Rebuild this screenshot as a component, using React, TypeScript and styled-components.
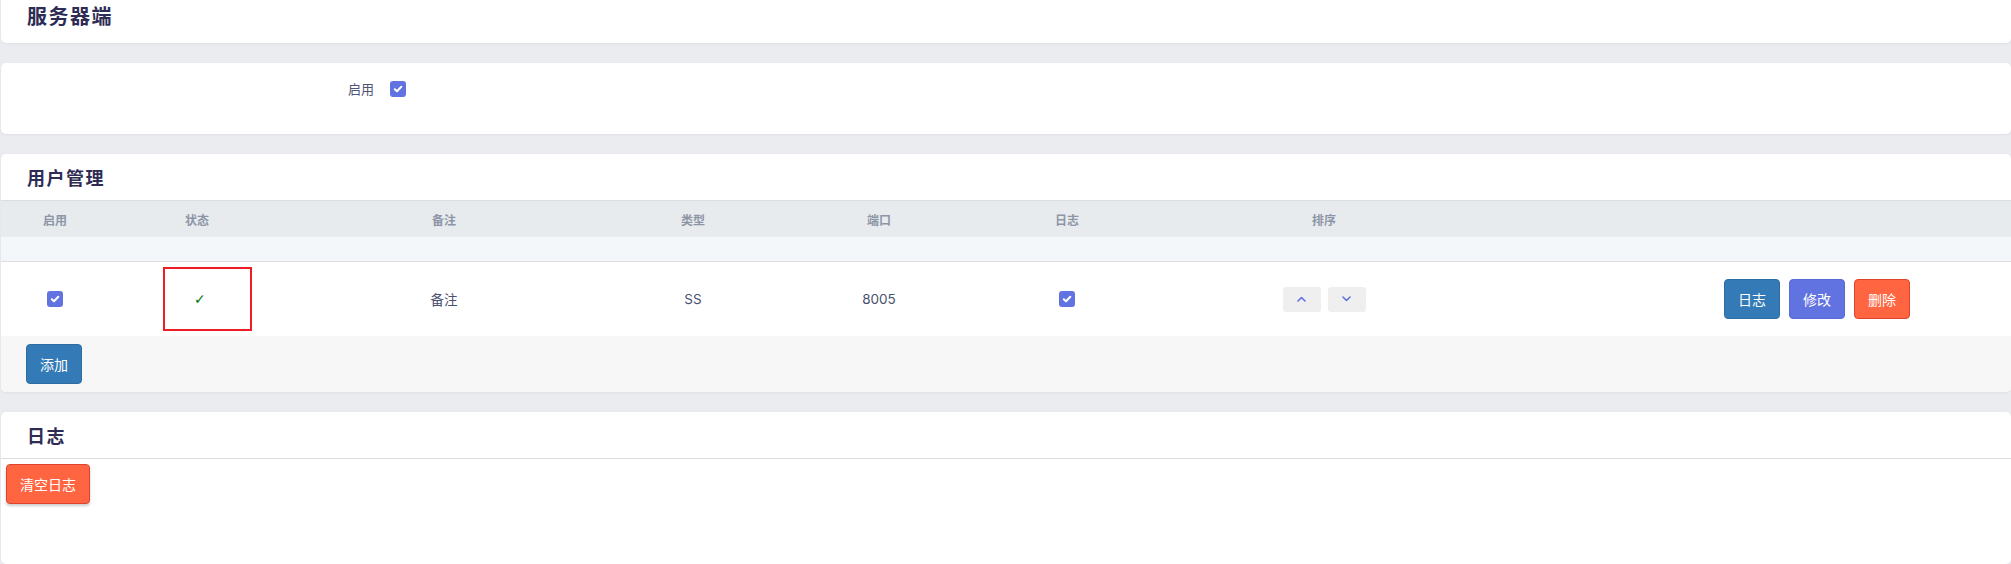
import React from 'react';
import styled, { createGlobalStyle } from 'styled-components';

const GlobalStyle = createGlobalStyle`
  html, body {
    margin: 0;
    padding: 0;
    background: #ebecf0;
    overflow: hidden;
  }
  body {
    font-family: Inter, "Noto Sans CJK SC", sans-serif;
    color: #4a5070;
  }
`;

const COLUMNS = '108px 176px 318px 180px 192px 184px 330px 1fr';

type Row = {
  enabled: boolean;
  note: string;
  type: string;
  port: number;
  log: boolean;
};

const rows: Row[] = [{ enabled: true, note: '备注', type: 'SS', port: 8005, log: true }];

const headers = ['启用', '状态', '备注', '类型', '端口', '日志', '排序', ''];

const CheckBox = () => (
  <Check>
    <svg width="10" height="10" viewBox="0 0 10 10">
      <path d="M1.8 5.2 L4 7.3 L8.3 2.8" fill="none" stroke="#fff" strokeWidth="2" strokeLinecap="round" strokeLinejoin="round" />
    </svg>
  </Check>
);

const Chevron = ({ up }: { up?: boolean }) => (
  <svg width="9" height="6" viewBox="0 0 9 6">
    <path
      d={up ? 'M1 5 L4.5 1.5 L8 5' : 'M1 1 L4.5 4.5 L8 1'}
      fill="none"
      stroke="#6173e0"
      strokeWidth="1.6"
      strokeLinecap="round"
      strokeLinejoin="round"
    />
  </svg>
);

export default function App() {
  return (
    <Page>
      <GlobalStyle />
      <Card top>
        <CardHeader big>
          <Title big>服务器端</Title>
        </CardHeader>
      </Card>

      <Card>
        <FormBody>
          <FormLabel>启用</FormLabel>
          <CheckBox />
        </FormBody>
      </Card>

      <Card>
        <CardHeader bordered>
          <Title>用户管理</Title>
        </CardHeader>
        <HeadRow>
          {headers.map((h, i) => (
            <HeadCell key={i}>{h}</HeadCell>
          ))}
        </HeadRow>
        <FilterRow />
        {rows.map((r, i) => (
          <DataRow key={i}>
            <Cell>{r.enabled && <CheckBox />}</Cell>
            <Cell>
              <StatusBox>
                <StatusMark>✓</StatusMark>
              </StatusBox>
            </Cell>
            <Cell>{r.note}</Cell>
            <Cell>{r.type}</Cell>
            <Cell>{r.port}</Cell>
            <Cell>{r.log && <CheckBox />}</Cell>
            <Cell>
              <SortButtons>
                <SortButton>
                  <Chevron up />
                </SortButton>
                <SortButton>
                  <Chevron />
                </SortButton>
              </SortButtons>
            </Cell>
            <ActionCell>
              <Button kind="primary">日志</Button>
              <Button kind="indigo">修改</Button>
              <Button kind="danger">删除</Button>
            </ActionCell>
          </DataRow>
        ))}
        <TableFooter>
          <Button kind="primary">添加</Button>
        </TableFooter>
      </Card>

      <Card grow>
        <CardHeader bordered>
          <Title>日志</Title>
        </CardHeader>
        <LogBody>
          <Button kind="danger" wide raised>
            清空日志
          </Button>
        </LogBody>
      </Card>
    </Page>
  );
}

const Page = styled.div`
  display: flex;
  flex-direction: column;
  gap: 20px;
  padding-left: 1px;
  height: 564px;
`;

const Card = styled.div<{ top?: boolean; grow?: boolean }>`
  background: #fff;
  border-radius: 5px;
  box-shadow: 0 1px 3px rgba(40, 50, 80, 0.06);
  overflow: hidden;
  margin-top: ${(p) => (p.top ? '-7px' : '0')};
  flex: ${(p) => (p.grow ? '1' : 'none')};
`;

const CardHeader = styled.div<{ big?: boolean; bordered?: boolean }>`
  display: flex;
  align-items: center;
  height: ${(p) => (p.big ? '44px' : '46px')};
  padding: ${(p) => (p.big ? '0 0 6px 26px' : '0 0 0 26px')};
  border-bottom: ${(p) => (p.bordered ? '1px solid #dcdde0' : 'none')};
`;

const Title = styled.h3<{ big?: boolean }>`
  margin: 0;
  font-family: "Noto Sans CJK SC", sans-serif;
  font-size: ${(p) => (p.big ? '20px' : '18px')};
  letter-spacing: 1.5px;
  font-weight: 700;
  color: #2e2c55;
`;

const FormBody = styled.div`
  display: grid;
  grid-template-columns: 373px auto;
  column-gap: 16px;
  align-items: center;
  justify-content: start;
  align-content: start;
  height: 71px;
  padding-top: 15px;
  box-sizing: border-box;
  line-height: 22px;
`;

const FormLabel = styled.label`
  text-align: right;
  font-family: "Noto Sans CJK SC", sans-serif;
  font-size: 13px;
  color: #4e5576;
`;

const Check = styled.span`
  display: inline-flex;
  align-items: center;
  justify-content: center;
  width: 16px;
  height: 16px;
  border-radius: 3px;
  background: #6173e0;
`;

const HeadRow = styled.div`
  display: grid;
  grid-template-columns: ${COLUMNS};
  height: 36px;
  background: #e8ebee;
  align-items: center;
`;

const HeadCell = styled.div`
  text-align: center;
  font-family: "Noto Sans CJK SC", sans-serif;
  font-size: 12px;
  font-weight: 700;
  color: #8d96a6;
`;

const FilterRow = styled.div`
  height: 24px;
  background: #f4f7f9;
  border-bottom: 1px solid #dcdde0;
`;

const DataRow = styled.div`
  display: grid;
  grid-template-columns: ${COLUMNS};
  height: 74px;
  align-items: center;
  background: #fff;
`;

const Cell = styled.div`
  display: flex;
  justify-content: center;
  align-items: center;
  font-size: 13.5px;
  color: #4a5070;
  font-family: Inter, "Noto Sans CJK SC", sans-serif;
`;

const ActionCell = styled.div`
  display: flex;
  align-items: center;
  gap: 9px;
  padding-left: 235px;
`;

const StatusBox = styled.div`
  width: 89px;
  height: 64px;
  border: 2px solid #ee1c25;
  margin-left: 21px;
  display: flex;
  align-items: center;
  padding-left: 29px;
  box-sizing: border-box;
`;

const StatusMark = styled.span`
  color: #007a0c;
  font-size: 14px;
  font-weight: 700;
  font-family: "DejaVu Sans", sans-serif;
`;

const SortButtons = styled.div`
  display: flex;
  gap: 7px;
`;

const SortButton = styled.button`
  width: 38px;
  height: 25px;
  border: none;
  border-radius: 3px;
  background: #efefef;
  display: flex;
  align-items: center;
  justify-content: center;
  padding: 0;
`;

const buttonColors = {
  primary: { bg: '#337ab7', border: '#2e6da4' },
  indigo: { bg: '#6173e0', border: '#5a6bd6' },
  danger: { bg: '#ff6541', border: '#e0432c' },
};

const Button = styled.button<{ kind: keyof typeof buttonColors; wide?: boolean; raised?: boolean }>`
  height: 40px;
  min-width: ${(p) => (p.wide ? '84px' : '56px')};
  padding: 0 12px;
  border-radius: 4px;
  border: 1px solid ${(p) => buttonColors[p.kind].border};
  background: ${(p) => buttonColors[p.kind].bg};
  color: #fff;
  font-family: "Noto Sans CJK SC", sans-serif;
  font-size: 14px;
  box-shadow: ${(p) => (p.raised ? '0 2px 3px rgba(0, 0, 0, 0.2)' : 'none')};
`;

const TableFooter = styled.div`
  background: #f7f7f7;
  height: 56px;
  padding: 8px 0 0 25px;
  box-sizing: border-box;
`;

const LogBody = styled.div`
  padding: 5px 5px;
`;
